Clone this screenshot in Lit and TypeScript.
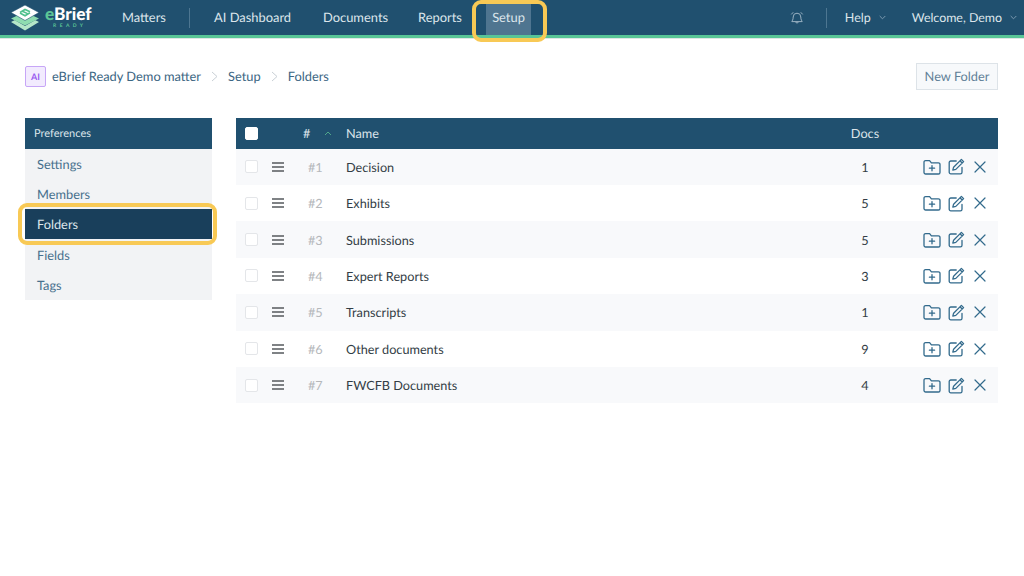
import { LitElement, html, css } from "lit";
import { customElement } from "lit/decorators.js";

const rows = [
  ["#1", "Decision", 1],
  ["#2", "Exhibits", 5],
  ["#3", "Submissions", 5],
  ["#4", "Expert Reports", 3],
  ["#5", "Transcripts", 1],
  ["#6", "Other documents", 9],
  ["#7", "FWCFB Documents", 4],
];

const chevDown = html`<svg class="chev" width="7" height="5" viewBox="0 0 7 5" fill="none" stroke="#7d9ab0" stroke-width="1"><path d="M.7 1l2.800 2.800L6.300 1"/></svg>`;
const crumbSep = html`<svg class="sep" width="7" height="11" viewBox="0 0 7 11" fill="none" stroke="#c9d0d6" stroke-width="1"><path d="M1 1l5 4.500-5 4.500"/></svg>`;

const logo = html`<svg width="30" height="27" viewBox="0 0 30 27">
  <path d="M15 11L29 18 15 26.500 1 18z" fill="#b5e6c8"/>
  <path d="M15 7L29 14 15 22 1 14z" fill="#1f5070"/>
  <path d="M15 8L29 14.500 15 21.500 1 14.500z" fill="#8fdcb0"/>
  <path d="M15 1L29 8.500 15 16.500 1 8.500z" fill="#fff" stroke="#1f5070" stroke-width=".6"/>
  <path d="M10 8.500l5-3 5 2.200M10 9l5 2.800 5-3M12.500 7.200l5 2.400" fill="none" stroke="#4fc08d" stroke-width="1.600"/>
</svg>`;

const folderPlus = html`<svg width="18" height="16" viewBox="0 0 18 16" fill="none" stroke="#326a8c" stroke-width="1.300" stroke-linejoin="round" stroke-linecap="round">
  <path d="M1 3.200a1.600 1.600 0 0 1 1.600-1.600h4l1.800 2.200h7a1.600 1.600 0 0 1 1.600 1.600v8a1.600 1.600 0 0 1-1.600 1.600H2.600A1.600 1.600 0 0 1 1 13.400z"/>
  <path d="M9 6.600v5.200M6.400 9.200h5.200"/>
</svg>`;
const edit = html`<svg width="17" height="17" viewBox="0 0 17 17" fill="none" stroke="#326a8c" stroke-width="1.300" stroke-linejoin="round" stroke-linecap="round">
  <path d="M14 9.500v4.700a1.600 1.600 0 0 1-1.600 1.600H2.800a1.600 1.600 0 0 1-1.600-1.600V4.600A1.600 1.600 0 0 1 2.800 3h5.400"/>
  <path d="M5.600 9.200L13.400 1.400l2.200 2.200-7.800 7.800-3 .8zM12 2.800l2.200 2.200"/>
</svg>`;
const close = html`<svg width="12" height="12" viewBox="0 0 12 12" fill="none" stroke="#326a8c" stroke-width="1.200" stroke-linecap="round"><path d="M1 1l10 10M11 1L1 11"/></svg>`;
const bell = html`<svg width="14" height="14" viewBox="0 0 14 14" fill="none" stroke="#9ab2c3" stroke-width="1"><path d="M7 2.200a3.800 3.800 0 0 1 3.800 3.800c0 2.800 1 3.600 1.400 4.600H1.800C2.200 9.600 3.200 8.800 3.200 6A3.800 3.800 0 0 1 7 2.200zM5.600 11a1.500 1.500 0 0 0 2.800 0M1.300 3.400L3.200 1.300M12.700 3.400L10.800 1.300"/></svg>`;
const drag = html`<svg class="drag" width="12" height="10" viewBox="0 0 12 10" stroke="#55595d" stroke-width="1.400"><path d="M0 1h12M0 5h12M0 9h12"/></svg>`;

@customElement("app-root")
export class AppRoot extends LitElement {
  static styles = css`
    :host { display: block; width: 1024px; height: 576px; background: #fff; overflow: hidden; font-family: "Lato", "Liberation Sans", sans-serif; text-rendering: geometricPrecision; }
    * { box-sizing: border-box; }
    header { height: 38px; background: #20506f; border-bottom: 3px solid #58c596; box-shadow: 0 1px 0 #dfe5e5; display: flex; align-items: stretch; color: #dce5eb; font-size: 12.900px; }
    .brand { display: flex; align-items: center; width: 122px; padding-left: 10px; gap: 5px; }
    .brand-text { display: flex; flex-direction: column; align-items: center; line-height: 1; }
    .wordmark { font-size: 17.200px; font-weight: 900; color: #fff; line-height: 15px; }
    .wordmark b { color: #5cc596; font-weight: 900; }
    .ready { font-size: 5px; font-weight: 700; letter-spacing: 3.400px; color: #5cc596; margin-top: 3px; line-height: 5px; padding-left: 3px; }
    nav { display: flex; align-items: stretch; flex: 1; }
    .tab { display: flex; align-items: center; position: relative; white-space: nowrap; padding-bottom: 1px; }
    .tab.matters { width: 67px; }
    .vline { width: 1px; height: 20px; background: #4d7691; align-self: center; }
    .tab.ai { margin-left: 24px; width: 109px; }
    .tab.docs { width: 95px; }
    .tab.reports { width: 68px; }
    .tab.setup { width: 45px; justify-content: center; background: #4f7590; margin-top: 3px; height: 32px; padding-bottom: 5px; }
    .spring { flex: 1; }
    .bell { display: flex; align-items: center; margin-right: 22px; }
    .help { margin-left: 18px; display: flex; align-items: center; gap: 8px; font-size: 12.500px; padding-bottom: 1px; }
    .welcome { margin-left: 26px; margin-right: 7px; display: flex; align-items: center; gap: 8px; font-size: 12.400px; padding-bottom: 1px; }
    .mark-top { position: absolute; left: -14px; top: -3px; width: 75px; height: 42px; border: 4px solid #f8c955; border-radius: 9px; pointer-events: none; }
    .main { padding: 25px 26px 0 25px; }
    .crumbs { height: 27px; display: flex; align-items: center; color: #3c6683; font-size: 12.850px; }
    .crumbs span { padding-bottom: 1px; }
    .badge { width: 21px; height: 21px; background: #f2ebfe; border: 1px solid #c7a6f7; border-radius: 2px; color: #9a5cf0; font-size: 9px; font-weight: 700; display: flex; align-items: center; justify-content: center; margin-right: 6px; }
    .sep { margin: 0 10px; }
    .new { margin-left: auto; width: 82px; height: 27px; border: 1px solid #dde3e8; background: #f7f9fb; color: #5f8097; font-size: 12.800px; padding-bottom: 1px; display: flex; align-items: center; justify-content: center; }
    .cols { display: flex; gap: 24px; margin-top: 28px; align-items: flex-start; }
    aside { width: 187px; background: #f2f3f5; }
    .side-head { height: 30.500px; background: #20506f; color: #dbe4ea; font-size: 11px; padding-left: 9px; display: flex; align-items: center; }
    .side-list { display: flex; flex-direction: column; }
    .side-item { height: 30.330px; display: flex; align-items: center; padding-left: 12px; color: #47708d; font-size: 12.800px; position: relative; }
    .side-item.on { background: #193f5b; color: #dfe7ec; }
    .mark-side { position: absolute; left: -7px; top: -6px; right: -5px; bottom: -6px; border: 4px solid #f8c955; border-radius: 9px; pointer-events: none; }
    .table { flex: 1; }
    .row { display: grid; grid-template-columns: 35px 32px 43px 1fr 42px 112px; align-items: center; height: 36.430px; font-size: 12.700px; color: #333d45; }
    .row:nth-child(even) { background: #f8f9fb; }
    .row.head { height: 30.500px; background: #20506f; color: #dbe4ea; }
    .box { width: 13px; height: 13px; border: 1px solid #e4e6e9; border-radius: 2px; background: #fff; margin-left: 9px; }
    .head .box { border-color: #fff; }
    .drag { display: block; margin-left: 1px; }
    .hash { display: flex; align-items: center; gap: 14px; }
    .num { color: #b5b8bb; padding-left: 5px; }
    .caret { display: block; }
    .docs { text-align: center; white-space: nowrap; }
    .acts { display: flex; align-items: center; gap: 7px; padding-left: 37px; }
    .acts svg { display: block; flex: none; }
    .acts svg:last-child { margin-left: 2px; }
  `;

  render() {
    return html`
      <header>
        <div class="brand">
          ${logo}
          <div class="brand-text">
            <div class="wordmark"><b>e</b>Brief</div>
            <div class="ready">READY</div>
          </div>
        </div>
        <nav>
          <div class="tab matters">Matters</div>
          <div class="vline"></div>
          <div class="tab ai">AI Dashboard</div>
          <div class="tab docs">Documents</div>
          <div class="tab reports">Reports</div>
          <div class="tab setup">Setup<div class="mark-top"></div></div>
          <div class="spring"></div>
          <div class="bell">${bell}</div>
          <div class="vline"></div>
          <div class="help">Help ${chevDown}</div>
          <div class="welcome">Welcome, Demo ${chevDown}</div>
        </nav>
      </header>
      <div class="main">
        <div class="crumbs">
          <div class="badge">AI</div>
          <span>eBrief Ready Demo matter</span>${crumbSep}<span>Setup</span>${crumbSep}<span>Folders</span>
          <div class="new">New Folder</div>
        </div>
        <div class="cols">
          <aside>
            <div class="side-head">Preferences</div>
            <div class="side-list">
              <div class="side-item">Settings</div>
              <div class="side-item">Members</div>
              <div class="side-item on">Folders<div class="mark-side"></div></div>
              <div class="side-item">Fields</div>
              <div class="side-item">Tags</div>
            </div>
          </aside>
          <div class="table">
            <div class="row head">
              <div class="box"></div>
              <div></div>
              <div class="hash">#
                <svg class="caret" width="8" height="5" viewBox="0 0 8 5" fill="none" stroke="#4fa68a" stroke-width="1"><path d="M1 4l3-3 3 3"/></svg>
              </div>
              <div>Name</div>
              <div class="docs">Docs</div>
              <div></div>
            </div>
            ${rows.map(
              ([n, name, d]) => html`
                <div class="row">
                  <div class="box"></div>
                  ${drag}
                  <div class="num">${n}</div>
                  <div>${name}</div>
                  <div class="docs">${d}</div>
                  <div class="acts">${folderPlus}${edit}${close}</div>
                </div>
              `
            )}
          </div>
        </div>
      </div>
    `;
  }
}
